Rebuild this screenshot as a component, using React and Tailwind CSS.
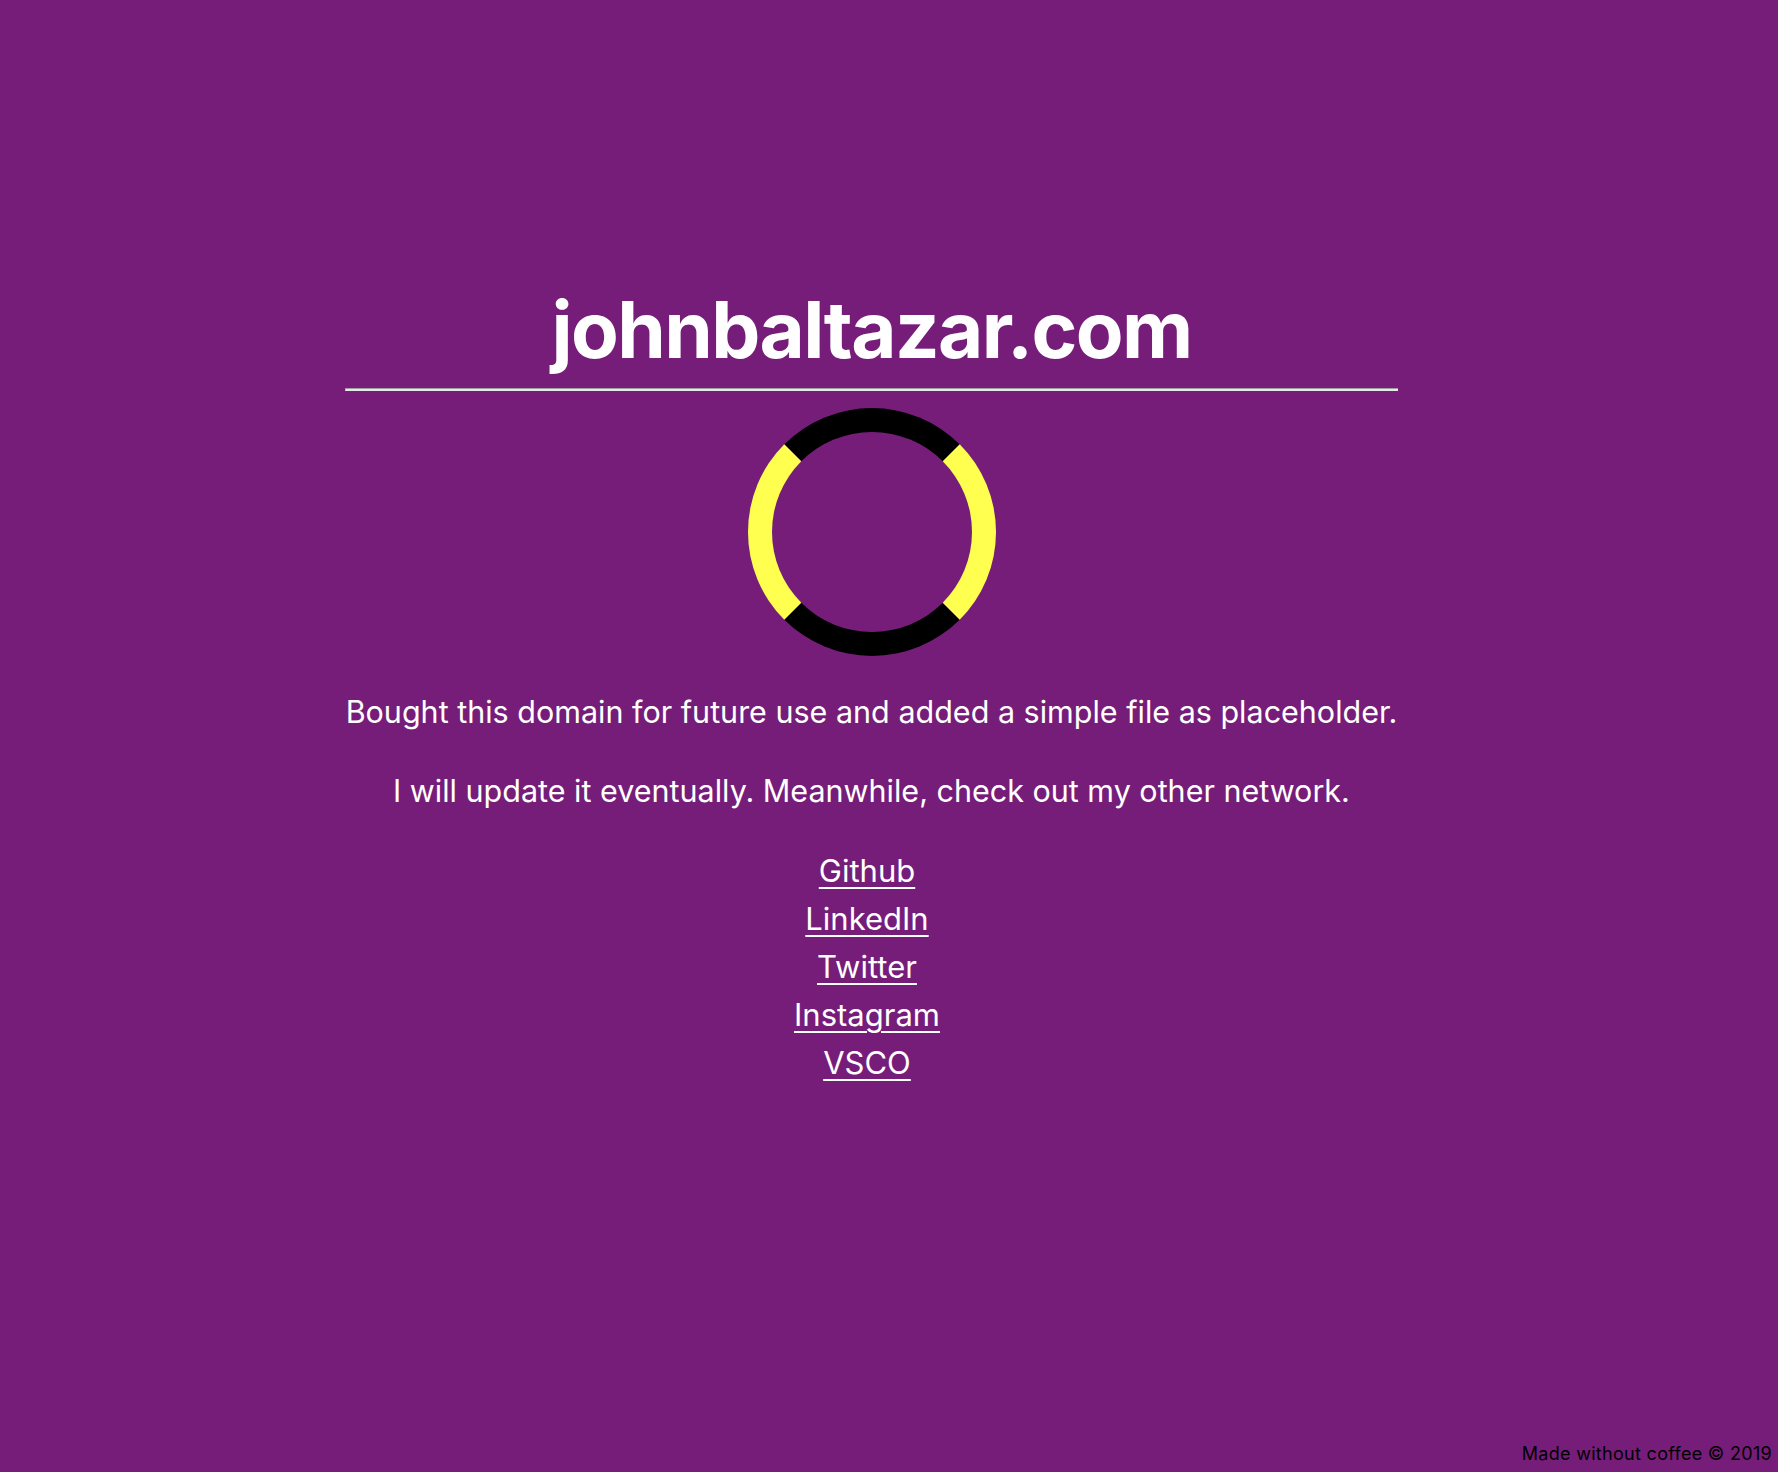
export default function App() {
    const links = ["Github", "LinkedIn", "Twitter", "Instagram", "VSCO"]

    return (
        <div className="min-h-screen flex flex-col bg-[#761d7a] font-['Inter','Noto_Sans',sans-serif]">
            <main className="ml-[345px] w-[1053px] pt-[282px] flex flex-col items-center text-white">
                <h1 className="text-[78px] leading-[96px] font-bold tracking-[-1.6px]">johnbaltazar.com</h1>
                <hr className="w-full mt-[10px] h-[3px] border-0 border-t border-t-[#a0a0a0] border-l border-l-[#a0a0a0] border-b-2 border-b-[#e8e8e8]" />
                <div className="mt-[17px] w-[248px] h-[248px] rounded-full border-[24px] border-t-black border-b-black border-l-[#ffff4f] border-r-[#ffff4f]" />
                <p className="mt-[38px] text-[30.5px] leading-[36px]">
                    Bought this domain for future use and added a simple file as placeholder.
                </p>
                <p className="mt-[43px] text-[30.5px] leading-[36px]">
                    I will update it eventually. Meanwhile, check out my other network.
                </p>
                <ul className="mt-[38px] pr-[9px] flex flex-col items-center">
                    {links.map((name) => (
                        <li key={name} className="text-[31px] leading-[48px]">
                            <a href="#" className="underline underline-offset-[5px] decoration-[2px]">{name}</a>
                        </li>
                    ))}
                </ul>
            </main>
            <footer className="mt-auto self-end pr-[6px] pb-[6px] text-[18px] leading-[24px] text-black tracking-[0.3px]">
                Made without coffee © 2019
            </footer>
        </div>
    )
}
